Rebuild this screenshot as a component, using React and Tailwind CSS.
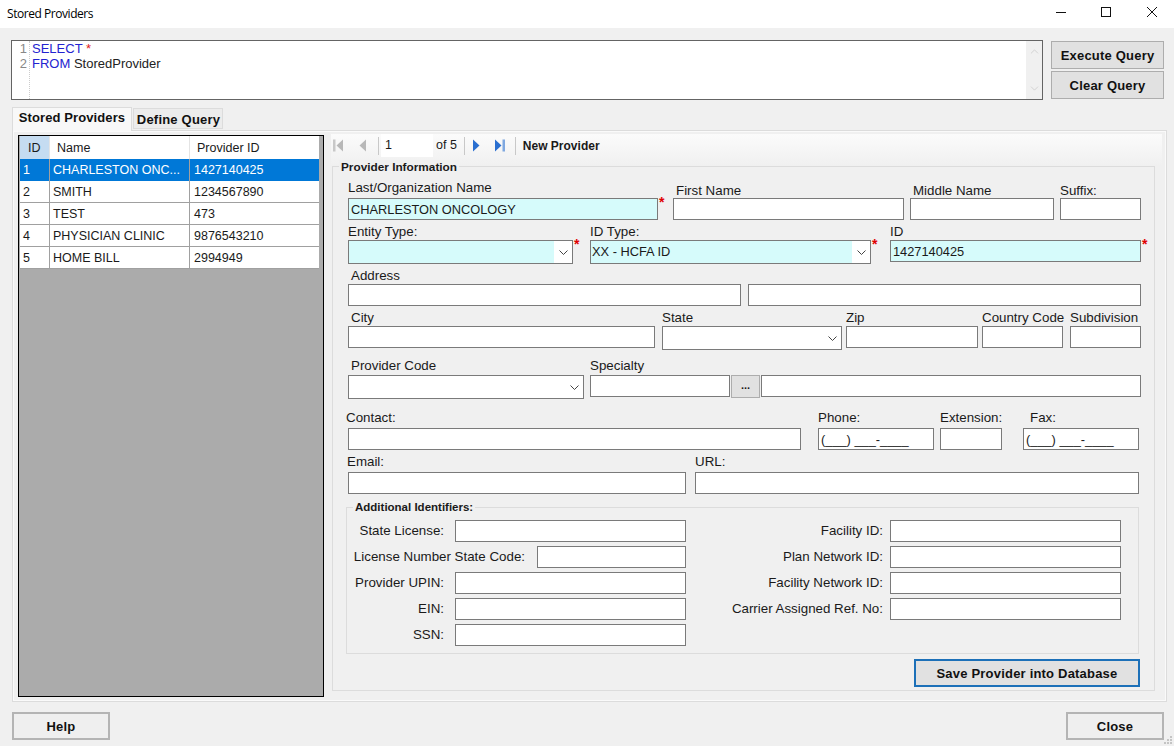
import React from 'react'
import { ChevronDown, ChevronUp } from 'lucide-react'

const rows = [
  { id: '1', name: 'CHARLESTON ONC...', providerId: '1427140425', selected: true },
  { id: '2', name: 'SMITH', providerId: '1234567890' },
  { id: '3', name: 'TEST', providerId: '473' },
  { id: '4', name: 'PHYSICIAN CLINIC', providerId: '9876543210' },
  { id: '5', name: 'HOME BILL', providerId: '2994949' },
]

const Star = () => <span className="absolute text-[#e00000] text-[14px] font-bold leading-none left-full ml-[2px] -top-[4px]">*</span>

// a text box with a label above it
const Field = ({ label, labelHeight, labelClass = 'pb-[1px]', className = 'w-[100px]', value, fill, star }) => (
  <div className={`shrink-0 ${className}`}>
    <div className={`flex items-end whitespace-nowrap leading-[15px] text-[13.33px] ${labelHeight} ${labelClass}`}>{label}</div>
    <div className={`relative h-[22px] border border-[#7a7a7a] pl-[2px] text-[12.8px] leading-[21px] whitespace-nowrap ${fill ? 'bg-[#d6fbfb]' : 'bg-white'}`}>
      {value}
      {star && <Star />}
    </div>
  </div>
)

const Combo = ({ label, labelHeight, labelClass = 'pb-[1px]', className, value, fill, star }) => (
  <div className={`shrink-0 ${className}`}>
    <div className={`flex items-end whitespace-nowrap leading-[15px] text-[13.33px] ${labelHeight} ${labelClass}`}>{label}</div>
    <div className="relative h-[24px] border border-[#7a7a7a] bg-white flex">
      <div className={`flex-1 pl-[1px] text-[12.8px] leading-[21px] ${fill ? 'bg-[#d6fbfb]' : 'bg-white'}`}>{value}</div>
      <div className="w-[18px] flex items-center justify-center">
        <svg width="9" height="5" viewBox="0 0 9 5"><path d="M0.5 0.5L4.5 4.5L8.5 0.5" fill="none" stroke="#444" strokeWidth="1" /></svg>
      </div>
      {star && <Star />}
    </div>
  </div>
)

const WinButton = ({ children, className }) => (
  <button className={`h-[28px] pt-[1px] border font-bold text-[13px] text-[#111] tracking-[0.2px] ${className}`}>
    {children}
  </button>
)

const IdRow = ({ left, leftClass = 'w-[231px] ml-[11px]', right }) => (
  <div className="flex h-[22px] items-center mb-[4px] text-[13.33px]">
    <div className="w-[339px] flex justify-end items-center">
      <span className="whitespace-nowrap">{left}</span>
      <div className={`h-[22px] border border-[#7a7a7a] bg-white shrink-0 ${leftClass}`} />
    </div>
    {right && (
      <div className="w-[435px] flex justify-end items-center">
        <span className="whitespace-nowrap">{right}</span>
        <div className="h-[22px] w-[231px] ml-[7px] border border-[#7a7a7a] bg-white shrink-0" />
      </div>
    )}
  </div>
)

const NavIcon = ({ dir, bar, color, barColor, className }) => (
  <svg width="11" height="13" viewBox="0 0 11 13" className={className}>
    {dir === 'left' ? (
      <>
        {bar && <rect x="0" y="0.5" width="2.5" height="12" fill={barColor} />}
        <path d="M10 0.5 L3.5 6.5 L10 12.5 Z" fill={color} />
      </>
    ) : (
      <>
        <path d="M0 0.5 L6.5 6.5 L0 12.5 Z" fill={color} />
        {bar && <rect x="7.5" y="0.5" width="2.5" height="12" fill={barColor} />}
      </>
    )}
  </svg>
)

const App = () => {
  return (
    <div className="w-[1174px] h-[746px] overflow-hidden bg-[#f0f0f0] text-[12.5px] text-[#1a1a1a] font-['Liberation_Sans',Arial,sans-serif] relative">
      {/* Title bar */}
      <div className="h-[28px] bg-white flex items-center pl-[7px]">
        <span className="text-[12px] font-['Open_Sans',sans-serif] text-black tracking-[-0.45px]">Stored Providers</span>
        <div className="ml-auto flex items-center mb-[4px]">
          <svg width="10" height="10" viewBox="0 0 10 10"><path d="M0 5.5H10" stroke="#111" strokeWidth="1" /></svg>
          <svg width="10" height="10" viewBox="0 0 10 10" className="ml-[35px]"><rect x="0.5" y="0.5" width="9" height="9" fill="none" stroke="#111" /></svg>
          <svg width="10" height="10" viewBox="0 0 10 10" className="ml-[36px] mr-[17px]"><path d="M0 0L10 10M10 0L0 10" stroke="#111" strokeWidth="1" /></svg>
        </div>
      </div>

      {/* Query editor */}
      <div className="flex mt-[12px] pl-[11px]">
        <div className="w-[1032px] h-[60px] border border-[#646464] bg-white flex text-[13px] leading-[15px]">
          <div className="w-[18px] text-right text-[#888] border-r border-dotted border-[#ccc] pr-[2px]">
            <div>1</div>
            <div>2</div>
          </div>
          <div className="flex-1 pl-[2px]">
            <div><span className="text-[#2323d0]">SELECT</span> <span className="text-[#e02020]">*</span></div>
            <div><span className="text-[#2323d0]">FROM</span> <span className="text-[#222]">StoredProvider</span></div>
          </div>
          <div className="w-[16px] bg-[#f0f0f0] flex flex-col justify-between items-center py-[4px]">
            <ChevronUp size={13} strokeWidth={1.25} className="text-[#c4c4c4]" />
            <ChevronDown size={13} strokeWidth={1.25} className="text-[#c4c4c4]" />
          </div>
        </div>
        <div className="ml-[8px] mt-[1px] flex flex-col gap-[2px] w-[113px]">
          <WinButton className="w-full bg-[#e1e1e1] border-[#adadad]">Execute Query</WinButton>
          <WinButton className="w-full bg-[#e1e1e1] border-[#adadad]">Clear Query</WinButton>
        </div>
      </div>

      {/* Tabs */}
      <div className="flex items-end mt-[7px] ml-[12px] h-[23px]">
        <div className="h-[24px] w-[120px] relative z-10 -mb-px bg-[#f8f8f8] border border-b-0 border-[#dcdcdc] font-bold text-[13px] tracking-[0.1px] text-center leading-[20px] text-[#111]">Stored Providers</div>
        <div className="h-[21px] w-[90px] ml-[1px] mb-[1px] pl-[1px] bg-[#ececec] border border-[#dcdcdc] font-bold text-[13px] tracking-[0.2px] text-center leading-[21px] text-[#111]">Define Query</div>
      </div>

      <div className="ml-[12px] w-[1155px] h-[572px] bg-[#f0f0f0] border border-[#dcdcdc] shadow-[inset_0_0_0_1px_#fafafa] flex items-start">
        {/* Grid */}
        <div className="ml-[5px] mt-[4px] w-[306px] h-[562px] border border-black bg-[#ababab] pl-[1px] shrink-0">
          <div className="flex h-[23px] w-[299px] bg-white">
            <div className="w-[29px] bg-[#c5dcf1] pl-[8px] leading-[24px]">ID</div>
            <div className="w-[140px] border-l border-[#e4e4e4] pl-[7px] leading-[24px]">Name</div>
            <div className="w-[130px] border-l border-[#e4e4e4] pl-[7px] leading-[24px]">Provider ID</div>
          </div>
          {rows.map(row => (
            <div key={row.id} className={`flex h-[22px] w-[299px] leading-[23px] ${row.selected ? 'bg-[#0078d7] text-white' : 'bg-white border-b border-[#a0a0a0]'}`}>
              <div className="w-[29px] pl-[3px]">{row.id}</div>
              <div className="w-[140px] border-l border-[#a0a0a0] pl-[3px] whitespace-nowrap">{row.name}</div>
              <div className="w-[130px] border-l border-[#a0a0a0] pl-[4px]">{row.providerId}</div>
            </div>
          ))}
        </div>

        <div className="ml-[7px] mt-[3px] w-[831px] shrink-0">
          {/* Record navigator */}
          <div className="h-[32px] bg-gradient-to-b from-[#fbfbfb] to-[#f0f0f0] flex items-start">
            <div className="h-[23px] flex items-center">
              <NavIcon dir="left" bar color="#b8b8b8" barColor="#c8c8c8" className="ml-[2px]" />
              <NavIcon dir="left" color="#b8b8b8" className="ml-[12px]" />
              <div className="w-px h-[18px] bg-[#c8c8c8] ml-[11px]" />
              <div className="w-[52px] h-[23px] bg-white ml-[2px] pl-[4px] leading-[23px]">1</div>
              <span className="ml-[3px]">of 5</span>
              <div className="w-px h-[18px] bg-[#c8c8c8] ml-[7px]" />
              <NavIcon dir="right" color="#2a6fd0" className="ml-[8px]" />
              <NavIcon dir="right" bar color="#2a6fd0" barColor="#7fa8e0" className="ml-[11px]" />
              <div className="w-px h-[18px] bg-[#c8c8c8] ml-[9px]" />
              <span className="ml-[7px] font-bold text-[12px]">New Provider</span>
            </div>
          </div>

          {/* Provider Information */}
          <div className="relative ml-[1px] w-[823px] h-[525px] border border-[#dcdcdc]">
            <span className="absolute left-[6px] -top-[7px] bg-[#f0f0f0] px-[2px] font-bold text-[11.8px] leading-[15px]">Provider Information</span>
            <div className="pl-[15px]">
              <div className="flex h-[53px]">
                <Field label="Last/Organization Name" labelHeight="h-[31px]" labelClass="pb-[3px]" className="w-[310px]" value="CHARLESTON ONCOLOGY" fill star />
                <Field label={<span className="pl-[3px]">First Name</span>} labelHeight="h-[31px]" labelClass="pb-0" className="w-[231px] ml-[15px]" />
                <Field label={<span className="pl-[3px]">Middle Name</span>} labelHeight="h-[31px]" labelClass="pb-0" className="w-[144px] ml-[6px]" />
                <Field label="Suffix:" labelHeight="h-[31px]" labelClass="pb-0" className="w-[81px] ml-[6px]" />
              </div>
              <div className="flex h-[42px]">
                <Combo label="Entity Type:" labelHeight="h-[20px]" className="w-[225px]" fill star />
                <Combo label="ID Type:" labelHeight="h-[20px]" className="w-[281px] ml-[17px]" value="XX - HCFA ID" fill star />
                <Field label="ID" labelHeight="h-[20px]" className="w-[251px] ml-[19px]" value="1427140425" fill star />
              </div>
              <div className="flex h-[44px]">
                <Field label={<span className="pl-[3px]">Address</span>} labelHeight="h-[22px]" className="w-[393px]" />
                <Field label="" labelHeight="h-[22px]" className="w-[393px] ml-[7px]" />
              </div>
              <div className="flex h-[42px]">
                <Field label={<span className="pl-[3px]">City</span>} labelHeight="h-[20px]" className="w-[307px]" />
                <Combo label="State" labelHeight="h-[20px]" className="w-[180px] ml-[7px]" />
                <Field label="Zip" labelHeight="h-[20px]" className="w-[132px] ml-[4px]" />
                <Field label="Country Code" labelHeight="h-[20px]" className="w-[81px] ml-[4px]" />
                <Field label="Subdivision" labelHeight="h-[20px]" className="w-[71px] ml-[7px]" />
              </div>
              <div className="flex h-[49px]">
                <Combo label={<span className="pl-[3px]">Provider Code</span>} labelHeight="h-[27px]" labelClass="pb-[2px]" className="w-[236px]" />
                <Field label="Specialty" labelHeight="h-[27px]" labelClass="pb-[2px]" className="w-[140px] ml-[6px]" />
                <div className="mt-[27px] ml-[1px] w-[29px] h-[23px] bg-[#e1e1e1] border border-[#adadad] text-center leading-[18px] font-bold text-[11px] shrink-0">...</div>
                <Field label="" labelHeight="h-[27px]" className="w-[380px] ml-[1px]" />
              </div>
              <div className="flex h-[53px]">
                <Field label={<span className="-ml-[2px]">Contact:</span>} labelHeight="h-[31px]" labelClass="pb-[3px]" className="w-[453px]" />
                <Field label="Phone:" labelHeight="h-[31px]" labelClass="pb-[3px]" className="w-[116px] ml-[17px]" value="(___) ___-____" />
                <Field label="Extension:" labelHeight="h-[31px]" labelClass="pb-[3px]" className="w-[62px] ml-[6px]" />
                <Field label={<span className="pl-[7px]">Fax:</span>} labelHeight="h-[31px]" labelClass="pb-[3px]" className="w-[116px] ml-[21px]" value="(___) ___-____" />
              </div>
              <div className="flex h-[44px]">
                <Field label={<span className="-ml-[1px]">Email:</span>} labelHeight="h-[22px]" labelClass="pb-[3px]" className="w-[338px]" />
                <Field label="URL:" labelHeight="h-[22px]" labelClass="pb-[3px]" className="w-[444px] ml-[9px]" />
              </div>
            </div>

            {/* Additional Identifiers */}
            <div className="relative mt-[13px] ml-[13px] w-[793px] h-[147px] border border-[#dcdcdc] pt-[12px]">
              <span className="absolute left-[6px] -top-[8px] bg-[#f0f0f0] px-[2px] font-bold text-[11.5px] leading-[15px]">Additional Identifiers:</span>
              <IdRow left="State License:" right="Facility ID:" />
              <IdRow left="License Number State Code:" leftClass="w-[149px] ml-[12px]" right="Plan Network ID:" />
              <IdRow left="Provider UPIN:" right="Facility Network ID:" />
              <IdRow left="EIN:" right="Carrier Assigned Ref. No:" />
              <IdRow left="SSN:" />
            </div>

            <div className="flex justify-end mt-[5px] mr-[14px]">
              <WinButton className="w-[226px] bg-[#e1e1e1] border-2 border-[#1c70b8]">Save Provider into Database</WinButton>
            </div>
          </div>
        </div>
      </div>

      {/* Footer */}
      <div className="flex justify-between mt-[10px] pl-[12px] pr-[10px]">
        <WinButton className="w-[98px] bg-[#efefef] border-2 border-[#b4b4b4]">Help</WinButton>
        <WinButton className="w-[98px] bg-[#efefef] border-2 border-[#b4b4b4]">Close</WinButton>
      </div>

      {/* Resize grip */}
      <svg width="10" height="10" viewBox="0 0 10 10" className="absolute right-[1px] bottom-[1px]">
        <path d="M7 1h2v2H7zM4 4h2v2H4zM7 4h2v2H7zM1 7h2v2H1zM4 7h2v2H4zM7 7h2v2H7z" fill="#c4c4c4" />
      </svg>
    </div>
  )
}

export default App
